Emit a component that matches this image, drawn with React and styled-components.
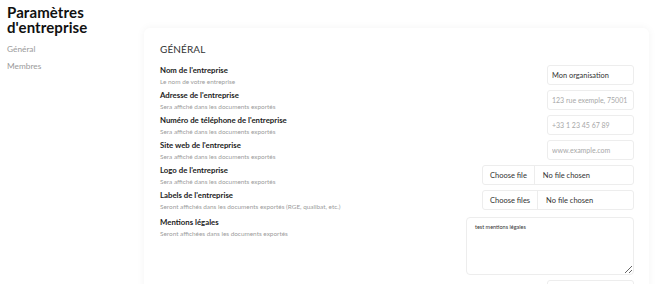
import React from "react";
import styled, { createGlobalStyle } from "styled-components";

const Global = createGlobalStyle`
  html, body { margin: 0; padding: 0; background: #fff; }
  body { font-family: "Lato", "Open Sans", sans-serif; color: #1f1f1f; }
  * { box-sizing: border-box; }
`;

const Page = styled.div`
  display: flex;
  align-items: flex-start;
  width: 670px;
  height: 284px;
  overflow: hidden;
`;

const Sidebar = styled.aside`
  width: 144px;
  flex-shrink: 0;
  padding: 5px 7px;
`;

const PageTitle = styled.h1`
  margin: 0;
  font-size: 15px;
  line-height: 15px;
  font-weight: 700;
  color: #111;
  letter-spacing: 0.1px;
`;

const NavList = styled.nav`
  display: flex;
  flex-direction: column;
  gap: 7px;
  margin-top: 9px;
`;

const NavItem = styled.a`
  font-size: 8.3px;
  color: #9a9a9a;
  text-decoration: none;
  line-height: 10px;
`;

const Card = styled.section`
  margin-top: 28px;
  width: 505px;
  background: #fff;
  border-radius: 6px;
  box-shadow: 0 0 9px rgba(0, 0, 0, 0.05);
  padding: 15px 15px 20px 16px;
`;

const SectionTitle = styled.h2`
  margin: 0 0 10px;
  font-size: 10px;
  line-height: 12px;
  font-weight: 400;
  color: #333;
  letter-spacing: 0.1px;
`;

const Rows = styled.div`
  display: flex;
  flex-direction: column;
  gap: 5px;
`;

const Row = styled.div`
  display: flex;
  justify-content: space-between;
  align-items: flex-start;
  min-height: 20px;
  padding-top: ${(p) => (p.$wide ? "2px" : "0")};
`;

const LabelBlock = styled.div`
  display: flex;
  flex-direction: column;
  gap: 3px;
  padding-top: 1px;
`;

const Label = styled.div`
  font-size: 7.8px;
  line-height: 9px;
  font-weight: 700;
  color: #1c1c1c;
`;

const Hint = styled.div`
  font-size: 6.4px;
  line-height: 7px;
  color: #9c9c9c;
`;

const TextInput = styled.input`
  width: 87px;
  height: 20px;
  border: 1px solid #ededed;
  border-radius: 3px;
  padding: 0 3px 0 4px;
  font-family: inherit;
  font-size: 7.4px;
  color: #333;
  outline: none;
  &::placeholder { color: #a8a8a8; font-size: 7px; }
`;

const FileBox = styled.div`
  display: flex;
  align-items: stretch;
  width: 152px;
  height: 20px;
  border: 1px solid #ededed;
  border-radius: 3px;
  font-size: 7.5px;
  color: #333;
`;

const FileButton = styled.div`
  display: flex;
  align-items: center;
  padding: 0 7px;
  border-right: 1px solid #ededed;
`;

const FileName = styled.div`
  display: flex;
  align-items: center;
  padding: 0 8px;
`;

const TextArea = styled.textarea`
  width: 168px;
  height: 58px;
  border: 1px solid #ededed;
  border-radius: 4px;
  padding: 6px 8px;
  font-family: inherit;
  font-size: 5.5px;
  color: #333;
  outline: none;
`;

const fields = [
  { label: "Nom de l'entreprise", hint: "Le nom de votre entreprise", type: "text", value: "Mon organisation" },
  { label: "Adresse de l'entreprise", hint: "Sera affiché dans les documents exportés", type: "text", placeholder: "123 rue exemple, 75001" },
  { label: "Numéro de téléphone de l'entreprise", hint: "Sera affiché dans les documents exportés", type: "text", placeholder: "+33 1 23 45 67 89" },
  { label: "Site web de l'entreprise", hint: "Sera affiché dans les documents exportés", type: "text", placeholder: "www.example.com" },
  { label: "Logo de l'entreprise", hint: "Sera affiché dans les documents exportés", type: "file", button: "Choose file" },
  { label: "Labels de l'entreprise", hint: "Seront affichés dans les documents exportés (RGE, qualibat, etc.)", type: "file", button: "Choose files" },
  { label: "Mentions légales", hint: "Seront affichées dans les documents exportés", type: "textarea", value: "test mentions légales" },
  { label: "", hint: "", type: "text", placeholder: "" },
];

function Control({ f }) {
  if (f.type === "file") {
    return (
      <FileBox>
        <FileButton>{f.button}</FileButton>
        <FileName>No file chosen</FileName>
      </FileBox>
    );
  }
  if (f.type === "textarea") {
    return <TextArea defaultValue={f.value} />;
  }
  return <TextInput defaultValue={f.value} placeholder={f.placeholder} />;
}

export default function App() {
  return (
    <>
      <Global />
      <Page>
        <Sidebar>
          <PageTitle>Paramètres d'entreprise</PageTitle>
          <NavList>
            <NavItem>Général</NavItem>
            <NavItem>Membres</NavItem>
          </NavList>
        </Sidebar>
        <Card>
          <SectionTitle>GÉNÉRAL</SectionTitle>
          <Rows>
            {fields.map((f, i) => (
              <Row key={i} $wide={f.type === "textarea"}>
                <LabelBlock>
                  <Label>{f.label}</Label>
                  <Hint>{f.hint}</Hint>
                </LabelBlock>
                <Control f={f} />
              </Row>
            ))}
          </Rows>
        </Card>
      </Page>
    </>
  );
}
